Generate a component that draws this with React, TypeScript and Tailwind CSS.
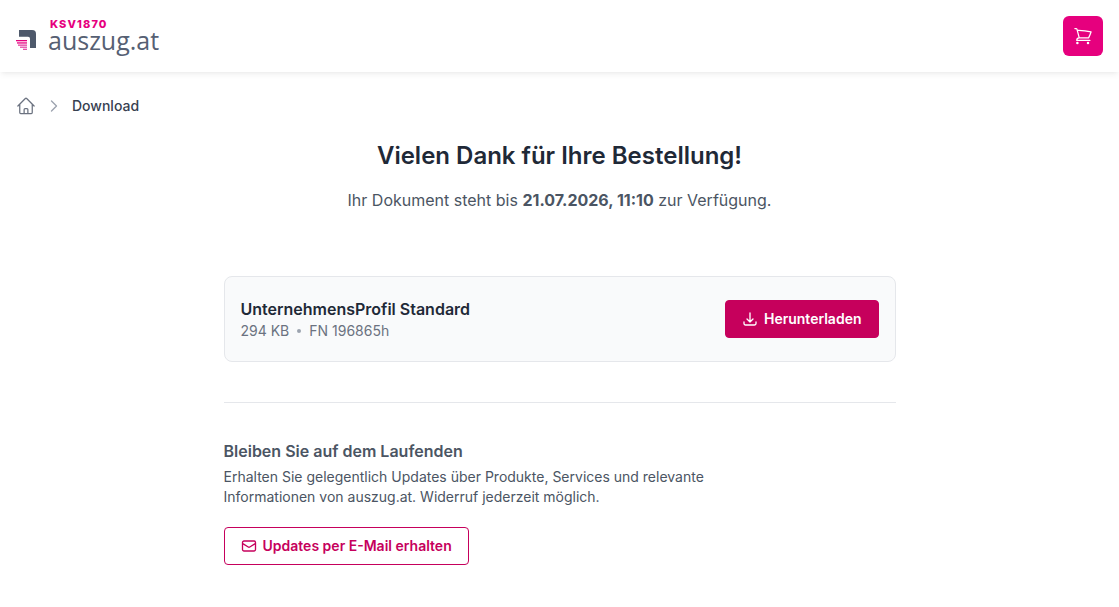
import {
  HiOutlineArrowDownTray,
  HiOutlineChevronRight,
  HiOutlineEnvelope,
  HiOutlineHome,
  HiOutlineShoppingCart,
} from 'react-icons/hi2'

const documents = [
  { name: 'UnternehmensProfil Standard', size: '294 KB', register: 'FN 196865h' },
]

function Logo() {
  return (
    <a href="/" className="flex items-end gap-3 pb-1">
      <svg className="h-5 w-5" viewBox="0 0 20 20" aria-hidden="true">
        <path fill="#4e596b" d="M3 0h13c3 0 4 1.500 4 4v14h-6V9c0-1.500-.8-2.300-2-2.300H3z" />
        <g fill="#e6007e">
          <path d="M0 10h11v1.300H0z" />
          <path d="M1 12.300h10v1.300H1z" />
        </g>
        <g fill="#e23fa0">
          <path d="M2 14.500h9v1.300H2z" />
          <path d="M4 16.600h7v1.200H4z" />
          <path d="M7 18.700h4v1.200H7z" />
        </g>
      </svg>
      <span className="flex flex-col">
        <span className="pl-0.5 text-[11px]/3 font-extrabold tracking-widest text-[#e6007e]">KSV1870</span>
        <span className="font-['Open_Sans',sans-serif] text-[25px]/5 text-[#566073]">auszug.at</span>
      </span>
    </a>
  )
}

export default function App() {
  return (
    <div className="min-h-screen bg-white font-[Inter,sans-serif] text-[#4b5563]">
      <header className="flex h-18 items-center justify-between px-4 shadow-md shadow-black/5">
        <Logo />
        <button aria-label="Warenkorb" className="flex h-10 w-10 items-center justify-center rounded-md bg-[#e6007e] text-white">
          <HiOutlineShoppingCart className="h-5 w-5" />
        </button>
      </header>

      <nav aria-label="Breadcrumb" className="flex items-center gap-2.5 px-4 pt-6 text-sm">
        <a href="/" aria-label="Startseite" className="text-[#6b7280]">
          <HiOutlineHome className="h-5 w-5" />
        </a>
        <HiOutlineChevronRight className="h-4 w-4 text-[#9ca3af]" strokeWidth={2} />
        <span className="font-medium text-[#374151]">Download</span>
      </nav>

      <main className="mx-auto max-w-2xl pt-6">
        <div className="text-center">
          <h1 className="text-2xl font-semibold text-[#1f2937]">Vielen Dank für Ihre Bestellung!</h1>
          <p className="mt-4">
            Ihr Dokument steht bis <strong className="font-bold">21.07.2026, 11:10</strong> zur Verfügung.
          </p>
        </div>

        <div className="mt-16">
          {documents.map(d => (
            <div key={d.name} className="flex items-center justify-between rounded-lg border border-[#e5e7eb] bg-[#f9fafb] px-4 py-5">
              <div>
                <h2 className="font-semibold text-[#1f2937]">{d.name}</h2>
                <p className="flex items-center gap-2 text-sm text-[#6b7280]">
                  {d.size}
                  <span className="h-1 w-1 rounded-full bg-[#9ca3af]" />
                  {d.register}
                </p>
              </div>
              <button className="flex items-center gap-1.5 rounded border border-[#c6005c] bg-[#c6005c] px-4 py-2 text-sm font-semibold text-white">
                <HiOutlineArrowDownTray className="h-4 w-4" strokeWidth={2} />
                Herunterladen
              </button>
            </div>
          ))}
        </div>

        <section className="mt-10 border-t border-[#e5e7eb] pt-9">
          <h2 className="font-semibold">Bleiben Sie auf dem Laufenden</h2>
          <p className="mt-1 max-w-lg text-sm">
            Erhalten Sie gelegentlich Updates über Produkte, Services und relevante Informationen von auszug.at. Widerruf jederzeit möglich.
          </p>
          <button className="mt-5 flex items-center gap-1.5 rounded border border-[#c6005c] px-4 py-2 text-sm font-semibold text-[#c6005c]">
            <HiOutlineEnvelope className="h-4 w-4" strokeWidth={2} />
            Updates per E-Mail erhalten
          </button>
        </section>
      </main>
    </div>
  )
}
